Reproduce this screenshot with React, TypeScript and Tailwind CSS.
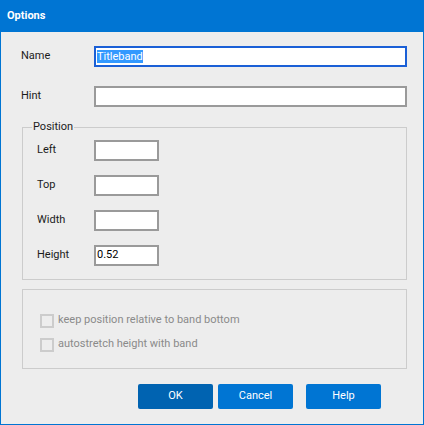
import React from 'react';

const font = { fontFamily: 'Roboto, "Noto Sans", sans-serif' };

const TextBox: React.FC<{ value?: string; className?: string; focused?: boolean }> = ({ value, className = '', focused }) => (
    <div className={`h-[21px] bg-white border-2 ${focused ? 'border-[#1a5fd6]' : 'border-[#9a9a9a]'} flex items-center px-[1px] text-[11px] text-black ${className}`}>
        {focused && value ? <span className="bg-[#3399ff] text-white leading-[13px]">{value}</span> : value}
    </div>
);

const PosRow: React.FC<{ label: string; value?: string }> = ({ label, value }) => (
    <div className="flex items-center h-[21px]">
        <span className="w-[57px] pl-[14px] box-content text-[11px] text-[#1b1b1b]">{label}</span>
        <TextBox value={value} className="w-[65px]" />
    </div>
);

const Check: React.FC<{ label: string }> = ({ label }) => (
    <label className="flex items-center gap-[4px] h-[15px] text-[11px] text-[#8a8a8a]">
        <span className="w-[14px] h-[14px] border-2 border-[#cccccc] bg-[#ededed]" />
        {label}
    </label>
);

export default function App() {
    return (
        <div className="w-[424px] h-[425px] flex flex-col select-none" style={font}>
            {/* Title bar */}
            <div className="h-[32px] bg-[#0075d3] flex items-center pl-[7px] text-white font-bold text-[11px]">Options</div>

            <div className="flex-1 bg-[#ededed] border-x border-b border-[#0075d3] pl-[20px] pr-[16px] pt-[14px]">
                {/* Name / Hint */}
                <div className="flex items-center h-[21px]">
                    <span className="w-[73px] text-[11px] text-[#1b1b1b]">Name</span>
                    <TextBox value="Titleband" focused className="w-[313px]" />
                </div>
                <div className="flex items-center h-[21px] mt-[19px]">
                    <span className="w-[73px] text-[11px] text-[#1b1b1b]">Hint</span>
                    <TextBox className="w-[313px]" />
                </div>

                {/* Position group */}
                <fieldset className="ml-[1px] w-[385px] h-[160px] mt-[13px] border border-[#cccccc] px-0 pt-[6px] flex flex-col gap-[14px]">
                    <legend className="ml-[9px] px-[1px] text-[11px] text-[#1b1b1b] leading-[14px]">Position</legend>
                    <PosRow label="Left" />
                    <PosRow label="Top" />
                    <PosRow label="Width" />
                    <PosRow label="Height" value="0.52" />
                </fieldset>

                {/* Options group */}
                <div className="ml-[1px] w-[385px] h-[80px] mt-[9px] border border-[#cccccc] pl-[17px] pt-[23px] flex flex-col gap-[9px]">
                    <Check label="keep position relative to band bottom" />
                    <Check label="autostretch height with band" />
                </div>

                {/* Buttons */}
                <div className="flex mt-[15px] ml-[117px] text-[11px] text-white">
                    <button className="w-[75px] h-[25px] rounded-[2px] bg-[#0063b1]">OK</button>
                    <button className="w-[75px] h-[25px] rounded-[2px] bg-[#0075d3] ml-[5px]">Cancel</button>
                    <button className="w-[75px] h-[25px] rounded-[2px] bg-[#0075d3] ml-[13px]">Help</button>
                </div>
            </div>
        </div>
    );
}
